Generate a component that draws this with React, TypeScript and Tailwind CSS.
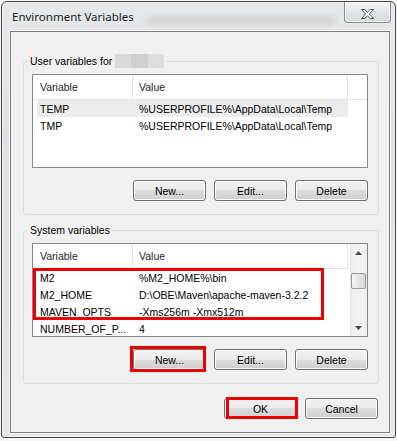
import type { ReactNode } from "react";

const bodyFont = "font-['Liberation_Sans','Arial',sans-serif]";
const titleFont = "font-['Noto_Sans','Open_Sans',sans-serif]";

const userVars = [
	{ name: "TEMP", value: "%USERPROFILE%\\AppData\\Local\\Temp", selected: true },
	{ name: "TMP", value: "%USERPROFILE%\\AppData\\Local\\Temp" },
];

const systemVars = [
	{ name: "M2", value: "%M2_HOME%\\bin" },
	{ name: "M2_HOME", value: "D:\\OBE\\Maven\\apache-maven-3.2.2" },
	{ name: "MAVEN_OPTS", value: "-Xms256m -Xmx512m" },
	{ name: "NUMBER_OF_P...", value: "4" },
];

function Button({ children, marked }: { children: ReactNode; marked?: "new" | "ok" }) {
	return (
		<div className="relative">
			<button className="flex h-[21px] w-[73px] items-center justify-center rounded-[3px] border border-[#707070] bg-[linear-gradient(#f2f2f2,#ebebeb_50%,#dddddd_50%,#cfcfcf)] text-black shadow-[inset_0_0_0_1px_#fbfbfb]">
				{children}
			</button>
			{/* red annotation boxes from the original screenshot */}
			{marked === "new" && (
				<div className="absolute -top-[3px] -bottom-[2px] -left-[3px] right-0 border-[3px] border-[#ee0000]" />
			)}
			{marked === "ok" && (
				<div className="absolute -top-[1px] bottom-0 left-[2px] -right-[1px] border-[3px] border-[#ee0000]" />
			)}
		</div>
	);
}

// Header of the list view; filler column runs to the right edge
function ListHeader() {
	return (
		<div className="flex h-[25px] shrink-0 border-b border-[#e5e5e5] bg-white text-[#1e1e1e]">
			<div className="flex w-[100px] items-center border-r border-[#e5e5e5] pl-[7px]">Variable</div>
			<div className="flex w-[215px] items-center border-r border-[#e5e5e5] pl-[6px]">Value</div>
			<div className="flex-1" />
		</div>
	);
}

function Row({ name, value, selected }: { name: string; value: string; selected?: boolean }) {
	return (
		<div className={`ml-[4px] flex h-[17px] w-[311px] items-center whitespace-nowrap text-black ${selected ? "bg-[#ececec]" : ""}`}>
			<div className="w-[96px] pl-[3px]">{name}</div>
			<div className="w-[215px] pl-[6px]">{value}</div>
		</div>
	);
}

function Arrow({ down }: { down?: boolean }) {
	return (
		<svg width="7" height="4" viewBox="0 0 7 4">
			<polygon points={down ? "0,0 7,0 3.5,4" : "0,4 7,4 3.5,0"} fill="#4a4a4a" />
		</svg>
	);
}

function ScrollBar() {
	return (
		<div className="flex w-[17px] shrink-0 flex-col bg-[linear-gradient(to_right,#e4e4e4,#f2f2f2_20%,#f2f2f2_80%,#e9e9e9)]">
			<div className="flex h-[17px] items-center justify-center">
				<Arrow />
			</div>
			<div className="flex-1">
				<div className="mt-[12px] ml-[1px] h-[16px] w-[15px] rounded-[2px] border border-[#999999] bg-[linear-gradient(to_right,#f5f5f5,#e6e6e6_50%,#d6d6d6)]" />
			</div>
			<div className="flex h-[17px] items-center justify-center">
				<Arrow down />
			</div>
		</div>
	);
}

function GroupBox({ legend, children }: { legend: ReactNode; children: ReactNode }) {
	return (
		<fieldset className="rounded-[3px] border border-[#d5dfe5]">
			<legend className="ml-[4px] flex h-[16px] items-center px-[2px] text-black">{legend}</legend>
			<div className="pt-[5px] pr-[10px] pb-[13px] pl-[8px]">{children}</div>
		</fieldset>
	);
}

function CloseGlyph() {
	return (
		<svg width="13" height="10" viewBox="-0.5 -0.5 13 10">
			<polygon
				points="0,0 3.2,0 6,2.6 8.8,0 12,0 7.9,4.5 12,9 8.8,9 6,6.4 3.2,9 0,9 4.1,4.5"
				fill="#ffffff"
				stroke="#4d5258"
				strokeWidth="1"
				strokeLinejoin="round"
			/>
		</svg>
	);
}

export default function App() {
	return (
		<div className={`h-[441px] w-[397px] bg-[#f6f6f6] pt-[1px] pl-[1px] text-[10.5px] leading-[16px] ${bodyFont}`}>
			<div className="flex h-[437px] w-[395px] flex-col rounded-t-[6px] rounded-b-[3px] border border-[#444444] bg-[linear-gradient(#e6e8ea,#dfe1e4_30%,#e2e4e6)] shadow-[inset_0_0_0_1px_rgba(255,255,255,0.55)]">
				{/* title bar */}
				<div className="flex h-[29px] shrink-0 items-start">
					<div className={`pt-[7px] pl-[10px] text-[11.5px] text-[#1b1b1b] ${titleFont}`}>Environment Variables</div>
					<div className="mt-[15px] ml-[12px] h-[7px] w-[190px] rounded-full bg-[#a9adb3] opacity-40 blur-[3px]" />
					<div className="mr-[4px] ml-auto flex h-[21px] w-[47px] items-center justify-center rounded-b-[4px] border border-t-0 border-[#8c9096] bg-[linear-gradient(#f3f4f5,#e3e5e8_50%,#d8dbdf)] pt-[3px] shadow-[inset_0_0_0_1px_rgba(255,255,255,0.7)]">
						<CloseGlyph />
					</div>
				</div>

				{/* client area */}
				<div className="mr-[5px] mb-[4px] ml-[8px] flex flex-1 flex-col border border-[#7f7f7f] bg-[#f0f0f0] pt-[21px] pr-[10px] pl-[12px] shadow-[0_0_0_1px_#f7f7f7]">
					<GroupBox
						legend={
							<>
								<span>User variables for&nbsp;</span>
								<span className="flex h-[14px] w-[49px]">
									<span className="w-[16px] bg-[#d9d9d9]" />
									<span className="w-[17px] bg-[#cfcfcf]" />
									<span className="w-[16px] bg-[#dedede]" />
								</span>
							</>
						}
					>
						<div className="flex h-[94px] flex-col overflow-hidden border border-[#828790] bg-white">
							<ListHeader />
							<div>
								{userVars.map((v) => (
									<Row key={v.name} {...v} />
								))}
							</div>
						</div>
						<div className="mt-[12px] flex justify-end gap-[8px]">
							<Button>New...</Button>
							<Button>Edit...</Button>
							<Button>Delete</Button>
						</div>
					</GroupBox>

					<div className="mt-[7px]">
						<GroupBox legend="System variables">
							<div className="flex h-[94px] overflow-hidden border border-[#828790] bg-white">
								<div className="flex flex-1 flex-col">
									<ListHeader />
									<div className="relative">
										{systemVars.map((v) => (
											<Row key={v.name} {...v} />
										))}
										<div className="absolute -top-[1px] left-0 h-[52px] w-[291px] border-[3px] border-[#ee0000]" />
									</div>
								</div>
								<ScrollBar />
							</div>
							<div className="mt-[12px] flex justify-end gap-[8px]">
								<Button marked="new">New...</Button>
								<Button>Edit...</Button>
								<Button>Delete</Button>
							</div>
						</GroupBox>
					</div>

					<div className="mt-[14px] mr-[1px] flex justify-end gap-[8px]">
						<Button marked="ok">OK</Button>
						<Button>Cancel</Button>
					</div>
				</div>
			</div>
		</div>
	);
}
